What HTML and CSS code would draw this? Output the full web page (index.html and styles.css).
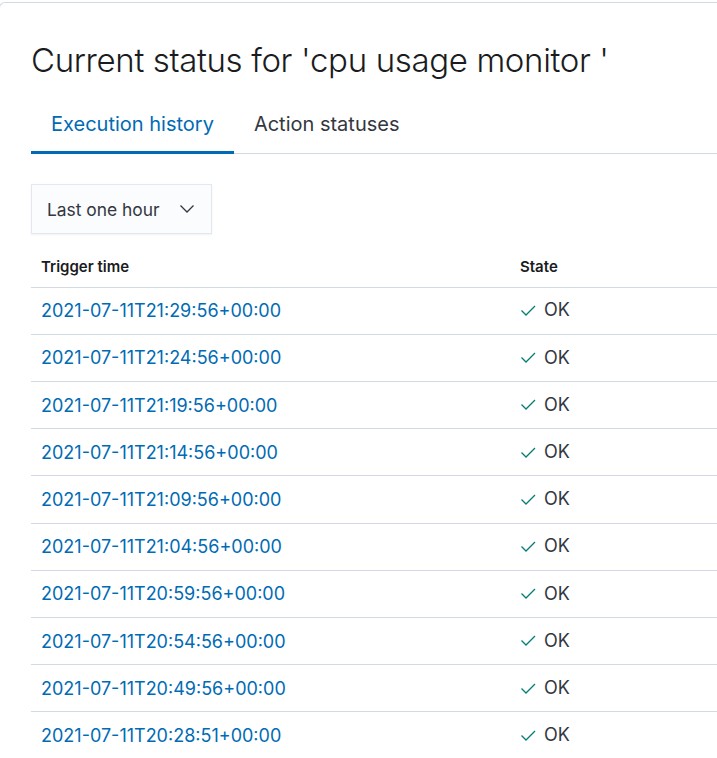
FILE: index.html
```html
<!DOCTYPE html>
<html>
<head>
<meta charset="utf-8">
<link rel="stylesheet" href="styles.css">
</head>
<body>
<div class="panel">
  <h1 class="title">Current status for 'cpu usage monitor '</h1>
  <div class="tabs">
    <div class="tab active">Execution history</div>
    <div class="tab">Action statuses</div>
  </div>
  <div class="select">
    <span>Last one hour</span>
    <svg class="chev" width="16" height="16" viewBox="0 0 16 16"><path d="M1.5 4.5 L8 11 L14.5 4.5" fill="none" stroke="#343741" stroke-width="1.3"/></svg>
  </div>
  <table class="tbl">
    <thead>
      <tr><th class="c1">Trigger time</th><th>State</th></tr>
    </thead>
    <tbody>
      <tr><td class="c1"><a>2021-07-11T21:29:56+00:00</a></td><td><span class="ok"><svg width="16" height="16" viewBox="0 0 16 16"><path d="M1.5 8.5 L6 13 L15 4" fill="none" stroke="#017D73" stroke-width="1.3"/></svg>OK</span></td></tr>
      <tr><td class="c1"><a>2021-07-11T21:24:56+00:00</a></td><td><span class="ok"><svg width="16" height="16" viewBox="0 0 16 16"><path d="M1.5 8.5 L6 13 L15 4" fill="none" stroke="#017D73" stroke-width="1.3"/></svg>OK</span></td></tr>
      <tr><td class="c1"><a>2021-07-11T21:19:56+00:00</a></td><td><span class="ok"><svg width="16" height="16" viewBox="0 0 16 16"><path d="M1.5 8.5 L6 13 L15 4" fill="none" stroke="#017D73" stroke-width="1.3"/></svg>OK</span></td></tr>
      <tr><td class="c1"><a>2021-07-11T21:14:56+00:00</a></td><td><span class="ok"><svg width="16" height="16" viewBox="0 0 16 16"><path d="M1.5 8.5 L6 13 L15 4" fill="none" stroke="#017D73" stroke-width="1.3"/></svg>OK</span></td></tr>
      <tr><td class="c1"><a>2021-07-11T21:09:56+00:00</a></td><td><span class="ok"><svg width="16" height="16" viewBox="0 0 16 16"><path d="M1.5 8.5 L6 13 L15 4" fill="none" stroke="#017D73" stroke-width="1.3"/></svg>OK</span></td></tr>
      <tr><td class="c1"><a>2021-07-11T21:04:56+00:00</a></td><td><span class="ok"><svg width="16" height="16" viewBox="0 0 16 16"><path d="M1.5 8.5 L6 13 L15 4" fill="none" stroke="#017D73" stroke-width="1.3"/></svg>OK</span></td></tr>
      <tr><td class="c1"><a>2021-07-11T20:59:56+00:00</a></td><td><span class="ok"><svg width="16" height="16" viewBox="0 0 16 16"><path d="M1.5 8.5 L6 13 L15 4" fill="none" stroke="#017D73" stroke-width="1.3"/></svg>OK</span></td></tr>
      <tr><td class="c1"><a>2021-07-11T20:54:56+00:00</a></td><td><span class="ok"><svg width="16" height="16" viewBox="0 0 16 16"><path d="M1.5 8.5 L6 13 L15 4" fill="none" stroke="#017D73" stroke-width="1.3"/></svg>OK</span></td></tr>
      <tr><td class="c1"><a>2021-07-11T20:49:56+00:00</a></td><td><span class="ok"><svg width="16" height="16" viewBox="0 0 16 16"><path d="M1.5 8.5 L6 13 L15 4" fill="none" stroke="#017D73" stroke-width="1.3"/></svg>OK</span></td></tr>
      <tr><td class="c1"><a>2021-07-11T20:28:51+00:00</a></td><td><span class="ok"><svg width="16" height="16" viewBox="0 0 16 16"><path d="M1.5 8.5 L6 13 L15 4" fill="none" stroke="#017D73" stroke-width="1.3"/></svg>OK</span></td></tr>
    </tbody>
  </table>
</div>
</body>
</html>
```
FILE: styles.css
```css
html, body {
  margin: 0;
  padding: 0;
  background: #fff;
  overflow: hidden;
}
body {
  font-family: Inter, "Noto Sans", sans-serif;
  color: #343741;
}
.panel {
  margin-top: 2px;
  margin-left: -1px;
  border-top: 1px solid #D3DAE6;
  border-left: 1px solid #D3DAE6;
  border-top-left-radius: 6px;
  padding: 0 0 0 31px;
  width: 900px;
}
.title {
  margin: 37px 0 0 0;
  font-size: 33px;
  font-weight: 300;
  line-height: 40px;
  color: #1a1c21;
  letter-spacing: -0.35px;
}
.tabs {
  display: flex;
  margin-top: 22px;
  border-bottom: 1px solid #D3DAE6;
}
.tab {
  padding: 2px 20px 10px;
  height: 40px;
  line-height: 40px;
  font-size: 20px;
  color: #343741;
  margin-bottom: -1px;
}
.tab.active {
  color: #006BB4;
  border-bottom: 3px solid #006BB4;
  padding-bottom: 7px;
}
.select {
  margin-top: 30px;
  width: 181px;
  height: 50px;
  box-sizing: border-box;
  background: #FBFCFD;
  border: 1px solid #E3E8F0;
  box-shadow: 0 1px 2px rgba(0,0,0,0.06);
  display: flex;
  align-items: center;
  justify-content: space-between;
  padding: 0 16px 0 15px;
  font-size: 17.4px;
  color: #343741;
}
.chev { display: block; }
.tbl {
  margin-top: 0;
  border-collapse: collapse;
  width: 860px;
}
.tbl th {
  text-align: left;
  vertical-align: bottom;
  font-size: 15px;
  font-weight: 600;
  color: #1a1c21;
  height: 53px;
  padding: 0 10px 11px;
  box-sizing: border-box;
  border-bottom: 1px solid #D3DAE6;
}
.tbl th.c1, .tbl td.c1 { width: 459px; }
.tbl td {
  height: 46.22px;
  padding: 0 10px;
  border-bottom: 1px solid #D3DAE6;
  font-size: 18px;
}
.tbl a {
  color: #006BB4;
}
.ok {
  display: inline-flex;
  align-items: center;
  gap: 8px;
  color: #343741;
}
.ok svg { display: block; }
```
